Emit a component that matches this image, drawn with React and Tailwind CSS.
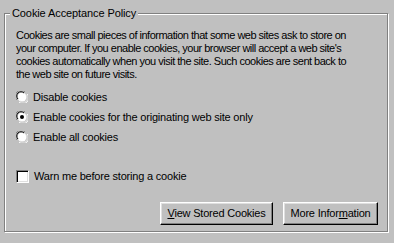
import React from 'react';

// Classic Win95-style cookie settings group box
const font = { fontFamily: '"Liberation Sans", Arial, sans-serif' };

const Radio = ({ checked }) => (
    <svg width="12" height="12" viewBox="0 0 12 12" className="shrink-0">
        {/* outer ring: gray top-left, white bottom-right */}
        <path d="M1 9 A5.5 5.5 0 0 1 9 1" fill="none" stroke="#808080" strokeWidth="1" />
        <path d="M3 11 A5.5 5.5 0 0 0 11 3" fill="none" stroke="#ffffff" strokeWidth="1" />
        <circle cx="6" cy="6" r="4.5" fill="#ffffff" />
        <path d="M2 8 A4.2 4.2 0 0 1 8 2" fill="none" stroke="#000000" strokeWidth="1" />
        <path d="M4 10 A4.2 4.2 0 0 0 10 4" fill="none" stroke="#dfdfdf" strokeWidth="1" />
        {checked && <circle cx="6" cy="6" r="2" fill="#000000" />}
    </svg>
);

const RadioRow = ({ label, checked }) => (
    <div className="flex items-center gap-[5px] h-[20px]">
        <Radio checked={checked} />
        <span>{label}</span>
    </div>
);

const Button = ({ children, width }) => (
    <button
        className={`h-[23px] ${width} bg-[#c0c0c0] text-black border border-t-white border-l-white border-r-black border-b-black shadow-[inset_-1px_-1px_0_#808080,inset_1px_1px_0_#dfdfdf] leading-none tracking-[-0.2px]`}
        style={font}
    >
        {children}
    </button>
);

export default function App() {
    return (
        <div className="w-[394px] h-[243px] bg-[#c0c0c0] pt-[13px] pl-[4px] text-[11px] text-black" style={font}>
            <div className="relative w-[384px] h-[219px] border border-[#808080] shadow-[inset_1px_1px_0_#ffffff,1px_1px_0_#ffffff] pl-[11px] pr-[4px] pt-[15px]">
                {/* group title sits over the top border */}
                <span className="absolute -top-[7px] left-[5px] px-[2px] bg-[#c0c0c0] leading-[13px] tracking-[-0.1px]">
                    Cookie Acceptance Policy
                </span>

                <p className="leading-[13px] whitespace-nowrap tracking-[-0.5px]">
                    Cookies are small pieces of information that some web sites ask to store on
                    <br />
                    your computer. If you enable cookies, your browser will accept a web site's
                    <br />
                    cookies automatically when you visit the site. Such cookies are sent back to
                    <br />
                    the web site on future visits.
                </p>

                <div className="mt-[6px] flex flex-col tracking-[-0.2px]">
                    <RadioRow label="Disable cookies" />
                    <RadioRow label="Enable cookies for the originating web site only" checked />
                    <RadioRow label="Enable all cookies" />
                </div>

                <div className="mt-[21px] flex items-center gap-[5px] tracking-[-0.2px]">
                    <span className="w-[13px] h-[13px] bg-white border border-t-[#808080] border-l-[#808080] border-r-white border-b-white shadow-[inset_1px_1px_0_#000,inset_-1px_-1px_0_#dfdfdf]" />
                    <span>Warn me before storing a cookie</span>
                </div>

                <div className="mt-[17px] flex justify-end gap-[10px] pr-[5px]">
                    <Button width="w-[113px]">
                        <u>V</u>iew Stored Cookies
                    </Button>
                    <Button width="w-[95px]">
                        More Infor<u>m</u>ation
                    </Button>
                </div>
            </div>
        </div>
    );
}
